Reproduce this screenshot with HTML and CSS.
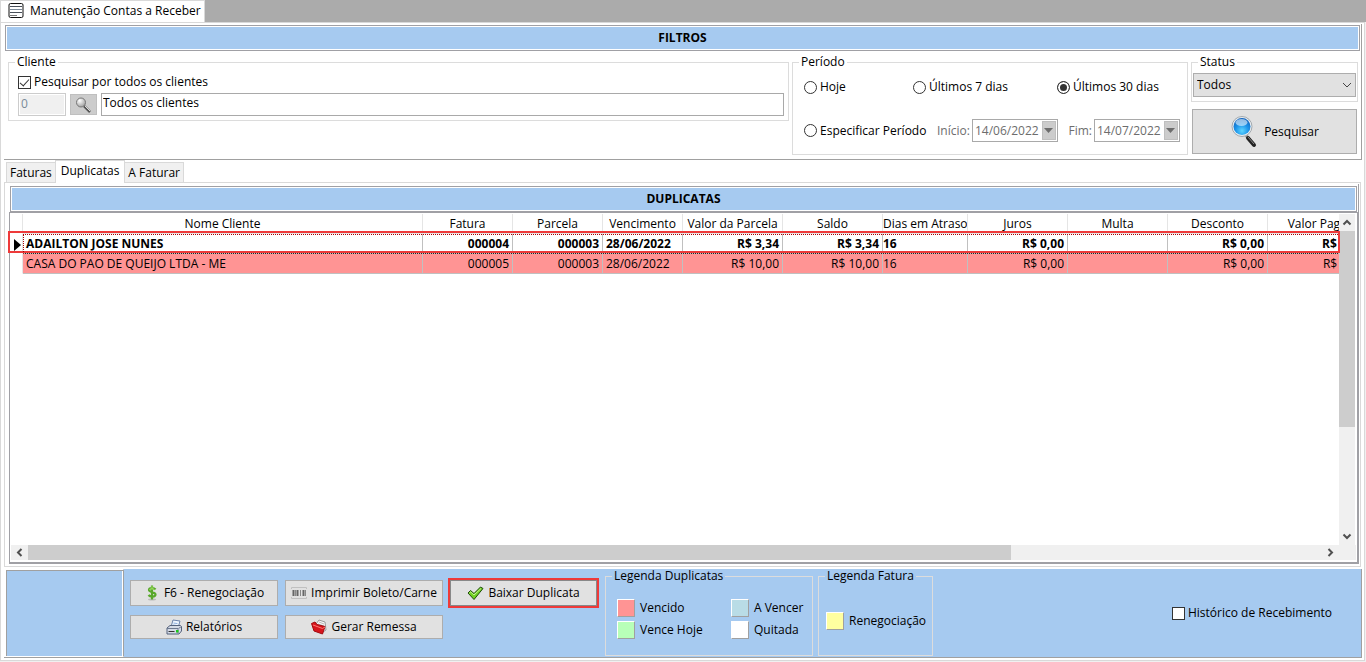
FILE: index.html
```html
<!DOCTYPE html>
<html lang="pt-BR">
<head>
    <meta charset="UTF-8">
    <meta name="viewport" content="width=device-width, initial-scale=1.0">
    <title>Manutenção Contas a Receber</title>
    <link rel="stylesheet" href="styles.css">
</head>
<body>
    <header class="titlebar">
        <a href="#" class="window-tab">
            <svg width="16" height="16" viewBox="0 0 16 16">
                <rect x="1" y=".5" width="14" height="14" rx="1.500" fill="#fff" stroke="#111"/>
                <path d="M2 3.500h12M2 9.500h12" stroke="#49505a"/>
                <path d="M2 6.500h12" stroke="#7b8a99"/>
                <path d="M2 12.500h7" stroke="#777"/>
            </svg>
            Manutenção Contas a Receber
        </a>
    </header>

    <main class="window">
        <section class="filters">
            <h2 class="bar">FILTROS</h2>
            <div class="filters-body">
                <fieldset class="group client">
                    <legend>Cliente</legend>
                    <label class="check"><input type="checkbox" checked>Pesquisar por todos os clientes</label>
                    <div class="client-row">
                        <input class="text code" type="text" value="0" aria-label="Código" disabled>
                        <button class="lookup" aria-label="Localizar cliente">
                            <svg width="18" height="18" viewBox="0 0 18 18">
                                <defs>
                                    <radialGradient id="glass" cx=".35" cy=".3" r=".8">
                                        <stop offset="0" stop-color="#fff"/>
                                        <stop offset="1" stop-color="#999"/>
                                    </radialGradient>
                                </defs>
                                <path d="M9 10l6 6" stroke="#555" stroke-width="2.500"/>
                                <path d="M10 10l5 5" stroke="#ddd"/>
                                <circle cx="6" cy="6.500" r="4.500" fill="url(#glass)" stroke="#777"/>
                            </svg>
                        </button>
                        <input class="text name" type="text" value="Todos os clientes" aria-label="Nome do cliente">
                    </div>
                </fieldset>

                <fieldset class="group period">
                    <legend>Período</legend>
                    <div class="period-row">
                        <label class="check today"><input type="radio" name="periodo">Hoje</label>
                        <label class="check week"><input type="radio" name="periodo">Últimos 7 dias</label>
                        <label class="check"><input type="radio" name="periodo" checked>Últimos 30 dias</label>
                    </div>
                    <div class="period-row dates">
                        <label class="check"><input type="radio" name="periodo">Especificar Período</label>
                        <label class="date">Início:
                            <span class="date-box">
                                <input type="text" value="14/06/2022" disabled>
                                <button aria-label="Abrir calendário" disabled><svg width="9" height="5" viewBox="0 0 9 5"><path d="M0 0h9L4.500 5z" fill="#6d6d6d"/></svg></button>
                            </span>
                        </label>
                        <label class="date">Fim:
                            <span class="date-box">
                                <input type="text" value="14/07/2022" disabled>
                                <button aria-label="Abrir calendário" disabled><svg width="9" height="5" viewBox="0 0 9 5"><path d="M0 0h9L4.500 5z" fill="#6d6d6d"/></svg></button>
                            </span>
                        </label>
                    </div>
                </fieldset>

                <div class="side">
                    <fieldset class="group status">
                        <legend>Status</legend>
                        <div class="select">
                            <select aria-label="Status">
                                <option>Todos</option>
                            </select>
                            <svg width="10" height="6" viewBox="0 0 10 6"><path d="M1 1l4 4 4-4" fill="none" stroke="#444"/></svg>
                        </div>
                    </fieldset>
                    <button class="btn search">
                        <svg width="28" height="32" viewBox="0 0 28 32">
                            <defs>
                                <radialGradient id="lens" cx=".5" cy=".75" r=".75">
                                    <stop offset="0" stop-color="#5fd6ff"/>
                                    <stop offset=".5" stop-color="#1c95ea"/>
                                    <stop offset="1" stop-color="#1260b8"/>
                                </radialGradient>
                            </defs>
                            <path d="M15 18l4 5" stroke="#999" stroke-width="3"/>
                            <path d="M18 22l6 7" stroke="#222" stroke-width="4" stroke-linecap="round"/>
                            <path d="M18 21l6 7" stroke="#888" stroke-width="1"/>
                            <circle cx="12" cy="10.500" r="10" fill="#e9eef2" stroke="#a2a9ae"/>
                            <circle cx="12" cy="10.500" r="8.500" fill="url(#lens)"/>
                            <ellipse cx="11.500" cy="6.500" rx="6" ry="3.500" fill="#fff" opacity=".55"/>
                        </svg>
                        Pesquisar
                    </button>
                </div>
            </div>
        </section>

        <nav class="tabs">
            <a href="#">Faturas</a>
            <a href="#" class="active">Duplicatas</a>
            <a href="#">A Faturar</a>
        </nav>

        <section class="tab-page">
            <div class="panel">
                <h2 class="bar">DUPLICATAS</h2>
                <div class="grid">
                    <div class="grid-view">
                        <table>
                            <colgroup>
                                <col class="c-mark"><col class="c-name"><col class="c-code"><col class="c-code"><col class="c-date">
                                <col class="c-money"><col class="c-money"><col class="c-days">
                                <col class="c-money"><col class="c-money"><col class="c-money"><col class="c-money">
                            </colgroup>
                            <thead>
                                <tr>
                                    <th></th>
                                    <th>Nome Cliente</th>
                                    <th>Fatura</th>
                                    <th>Parcela</th>
                                    <th>Vencimento</th>
                                    <th>Valor da Parcela</th>
                                    <th>Saldo</th>
                                    <th>Dias em Atraso</th>
                                    <th>Juros</th>
                                    <th>Multa</th>
                                    <th>Desconto</th>
                                    <th>Valor Pago</th>
                                </tr>
                            </thead>
                            <tbody>
                                <tr class="current">
                                    <td class="mark"><svg width="7" height="12" viewBox="0 0 7 12"><path d="M0 0l7 6-7 6z"/></svg></td>
                                    <td>ADAILTON JOSE NUNES</td>
                                    <td class="num">000004</td>
                                    <td class="num">000003</td>
                                    <td>28/06/2022</td>
                                    <td class="num">R$ 3,34</td>
                                    <td class="num">R$ 3,34</td>
                                    <td class="days">16</td>
                                    <td class="num">R$ 0,00</td>
                                    <td></td>
                                    <td class="num">R$ 0,00</td>
                                    <td class="num">R$ 0,00</td>
                                </tr>
                                <tr class="overdue">
                                    <td class="mark"></td>
                                    <td>CASA DO PAO DE QUEIJO LTDA - ME</td>
                                    <td class="num">000005</td>
                                    <td class="num">000003</td>
                                    <td>28/06/2022</td>
                                    <td class="num">R$ 10,00</td>
                                    <td class="num">R$ 10,00</td>
                                    <td class="days">16</td>
                                    <td class="num">R$ 0,00</td>
                                    <td></td>
                                    <td class="num">R$ 0,00</td>
                                    <td class="num">R$ 0,00</td>
                                </tr>
                            </tbody>
                        </table>
                    </div>
                    <div class="scroll scroll-y">
                        <svg width="16" height="17" viewBox="0 0 16 17"><path d="M4.500 10.500L8 7l3.500 3.500" fill="none" stroke="#505050" stroke-width="2"/></svg>
                        <div class="track"><div class="thumb"></div></div>
                        <svg width="16" height="17" viewBox="0 0 16 17"><path d="M4.500 6.500L8 10l3.500-3.500" fill="none" stroke="#505050" stroke-width="2"/></svg>
                    </div>
                    <div class="scroll scroll-x">
                        <svg width="17" height="15" viewBox="0 0 17 15"><path d="M10.500 4l-3.500 3.500 3.500 3.500" fill="none" stroke="#505050" stroke-width="2"/></svg>
                        <div class="track"><div class="thumb"></div></div>
                        <svg width="17" height="15" viewBox="0 0 17 15"><path d="M6.500 4l3.500 3.500-3.500 3.500" fill="none" stroke="#505050" stroke-width="2"/></svg>
                    </div>
                    <div class="row-marker"></div>
                </div>
            </div>
        </section>

        <footer class="footer">
            <div class="blank"></div>
            <div class="actions">
                <div class="buttons">
                    <button class="btn">
                        <svg width="16" height="16" viewBox="0 0 16 16">
                            <ellipse cx="8" cy="14.500" rx="4" ry="1" fill="#bbb"/>
                            <path d="M11.500 4.500C10 2.500 5 2.500 5 5s6.500 1.700 6.500 4.500S6 12 4.500 10M8 .5v14" fill="none" stroke="#5aa82c" stroke-width="2.200"/>
                            <path d="M10.500 4.500C9 3 5.500 3.500 5.500 5M8 1v4" fill="none" stroke="#9bdc5c"/>
                        </svg>
                        F6 - Renegociação
                    </button>
                    <button class="btn">
                        <svg width="16" height="14" viewBox="0 0 16 14">
                            <path d="M.5 3V1.500h15V3M.5 11v1.500h15V11" fill="none" stroke="#c0c0c0"/>
                            <path d="M2.500 4v6M6.500 4v6M12.500 4v6" stroke="#666" stroke-width="2"/>
                            <path d="M4.500 4v6M9.500 4v6M14.500 4v6" stroke="#888"/>
                        </svg>
                        Imprimir Boleto/Carne
                    </button>
                    <div class="highlight">
                        <button class="btn">
                            <svg width="17" height="15" viewBox="0 0 17 15">
                                <path d="M1 7l2.500-2.500L7 7.500 13.500 1 16 2.500 7 13.500z" fill="#6fd022" stroke="#1f4d0a"/>
                                <path d="M2.500 7l1.200-1 3.300 3 7-6.500" fill="none" stroke="#c5f590"/>
                            </svg>
                            Baixar Duplicata
                        </button>
                    </div>
                    <button class="btn">
                        <svg width="16" height="16" viewBox="0 0 16 16">
                            <path d="M5 8l2-7 7 1-2 7z" fill="#eef5ff" stroke="#6d84ad"/>
                            <path d="M7.500 4l4 .6M7 6l4 .6" stroke="#8fb0dd"/>
                            <path d="M1 9l3-2.500h10.500l1 1V12L13 15H1z" fill="#d4dae6" stroke="#55627c"/>
                            <path d="M1 9.500h11v5M12.500 9.500l3-2" fill="none" stroke="#6d7990"/>
                            <path d="M2.500 12.500h6" stroke="#333"/>
                            <rect x="10" y="11" width="2.500" height="2.500" fill="#19c919"/>
                        </svg>
                        Relatórios
                    </button>
                    <button class="btn">
                        <svg width="16" height="16" viewBox="0 0 16 16">
                            <path d="M5 5l3-4 6 2 1 8-3 2z" fill="#f5f5f5" stroke="#999"/>
                            <path d="M8 3l5 2M7 5l6 2" stroke="#bbb"/>
                            <path d="M.5 4.500L4 3l2 2.500 8 2L11.500 15 3 12z" fill="#d8151c" stroke="#a10c10"/>
                            <path d="M2 6l9.500 3.500L14 8" fill="none" stroke="#ff7772"/>
                        </svg>
                        Gerar Remessa
                    </button>
                </div>
                <fieldset class="group legend-dup">
                    <legend>Legenda Duplicatas</legend>
                    <span class="key"><i class="swatch red"></i>Vencido</span>
                    <span class="key"><i class="swatch blue"></i>A Vencer</span>
                    <span class="key"><i class="swatch green"></i>Vence Hoje</span>
                    <span class="key"><i class="swatch white"></i>Quitada</span>
                </fieldset>
                <fieldset class="group legend-fat">
                    <legend>Legenda Fatura</legend>
                    <span class="key"><i class="swatch yellow"></i>Renegociação</span>
                </fieldset>
                <label class="check history"><input type="checkbox">Histórico de Recebimento</label>
            </div>
        </footer>
    </main>
</body>
</html>
```
FILE: styles.css
```css
* {
    box-sizing: border-box;
    margin: 0;
    padding: 0;
}

body {
    min-height: 100vh;
    display: flex;
    flex-direction: column;
    padding: 0 1px 1px 0;
    background-color: #f0f0f0;
}

body, button, input, select {
    font-family: "Open Sans", "Noto Sans", sans-serif;
    font-size: 12px;
    line-height: 16px;
    color: #000;
}

a {
    color: #000;
    text-decoration: none;
}

svg {
    flex: none;
    display: block;
}

/* title bar */
.titlebar {
    display: flex;
    height: 22px;
    margin-right: -1px;
    background-color: #ababab;
}

.window-tab {
    display: flex;
    align-items: center;
    gap: 6px;
    padding: 0 3px 1px 7px;
    background-color: #fff;
    border: 1px solid #d9d9d9;
    border-bottom: none;
}

.window {
    flex: 1;
    display: flex;
    flex-direction: column;
    padding: 1px 2px 2px 3px;
    background-color: #fff;
    border: 1px solid #d9d9d9;
}

.bar {
    height: 26px;
    line-height: 22px;
    font-size: 12px;
    text-align: center;
    background-color: #a6caf0;
    border: 1px solid #a0a0a5;
    box-shadow: inset 0 0 0 1px #fff;
    padding-top: 1px;
}

/* filters */
.filters {
    padding: 1px;
    border: solid #a0a0a0;
    border-width: 0 1px 1px 0;
}

.filters-body {
    display: flex;
    gap: 3px;
    padding: 4px 2px 3px 3px;
}

.group {
    min-width: 0;
    border: 1px solid #dcdcdc;
}

.group legend {
    padding: 0 2px;
    line-height: 14px;
}

.check {
    display: flex;
    align-items: center;
    gap: 3px;
    white-space: nowrap;
}

.check input {
    appearance: none;
    flex: none;
    display: flex;
    justify-content: center;
    width: 13px;
    height: 13px;
    background-color: #fff;
    border: 1px solid #333;
}

.check input[type="radio"] {
    border-radius: 50%;
}

.check input[type="radio"]:checked {
    background-color: #333;
    box-shadow: inset 0 0 0 2px #fff;
}

.check input[type="checkbox"]:checked::before {
    content: "";
    width: 4px;
    height: 8px;
    border: solid #333;
    border-width: 0 1px 1px 0;
    transform: rotate(42deg);
}

.client {
    flex: 1;
    align-self: flex-start;
    padding: 5px 4px 4px 9px;
}

.client legend {
    margin-left: -3px;
}

.client-row {
    display: flex;
    align-items: center;
    gap: 4px;
    margin-top: 3px;
}

.text {
    height: 23px;
    padding: 0 1px 4px;
    background-color: #fff;
    border: 1px solid #a9a9a9;
}

.text.code {
    width: 48px;
    background-color: #f0f0f0;
    border-color: #ccc;
    box-shadow: inset 0 0 0 1px #fff;
    color: #7a8a99;
    padding: 0 2px 2px;
}

.text.name {
    flex: 1;
}

.lookup {
    display: flex;
    align-items: center;
    justify-content: center;
    width: 27px;
    height: 21px;
    background-color: #ccc;
    border: 1px solid #bfbfbf;
}

.period {
    width: 396px;
    padding: 10px 7px 12px 11px;
}

.period legend {
    margin-left: -5px;
}

.period-row {
    display: flex;
    align-items: center;
}

.today {
    width: 109px;
}

.week {
    width: 144px;
}

.dates {
    justify-content: space-between;
    margin-top: 24px;
}

.date {
    display: flex;
    align-items: center;
    gap: 2px;
    color: #6d6d6d;
}

.date-box {
    display: flex;
    width: 86px;
    height: 23px;
    padding: 1px;
    border: 1px solid #a9a9a9;
}

.date-box input {
    flex: 1;
    min-width: 0;
    padding-left: 1px;
    border: none;
    background-color: #fff;
    color: #6d6d6d;
}

.date-box button {
    display: flex;
    align-items: center;
    justify-content: center;
    width: 14px;
    background-color: #ccc;
    border: 1px solid #bfbfbf;
}

.side {
    width: 167px;
    display: flex;
    flex-direction: column;
    gap: 7px;
}

.status {
    padding: 4px 1px;
}

.status legend {
    margin-left: 5px;
}

.select {
    position: relative;
}

.select select {
    appearance: none;
    display: block;
    width: 100%;
    height: 24px;
    padding: 0 3px;
    background-color: #e1e1e1;
    border: 1px solid #adadad;
    border-radius: 0;
}

.select svg {
    position: absolute;
    top: 9px;
    right: 4px;
    pointer-events: none;
}

.btn {
    display: flex;
    align-items: center;
    justify-content: center;
    gap: 4px;
    background-color: #e1e1e1;
    border: 1px solid #adadad;
    white-space: nowrap;
}

.search {
    height: 45px;
    margin: 0 1px;
    gap: 6px;
}

/* tabs */
.tabs {
    display: flex;
    align-items: flex-end;
    height: 23px;
    padding-left: 2px;
}

.tabs a {
    height: 21px;
    padding: 2px 3px;
    background-color: #f0f0f0;
    border: 1px solid #d9d9d9;
}

.tabs .active {
    z-index: 1;
    height: 23px;
    padding: 2px 5px;
    margin: 0 -1px;
    background-color: #fff;
    border-bottom: none;
}

.tab-page {
    flex: 1;
    display: flex;
    margin: -1px 1px 2px 0;
    padding: 1px 1px 2px 4px;
    border: 1px solid #d9d9d9;
}

.panel {
    flex: 1;
    min-width: 0;
    display: flex;
    flex-direction: column;
    padding-top: 2px;
    border: solid #a0a0a5;
    border-width: 0 1px 1px 0;
}

.panel .bar {
    margin: 0 1px;
}

/* data grid */
.grid {
    flex: 1;
    position: relative;
    display: grid;
    grid-template-columns: minmax(0, 1fr) 18px;
    grid-template-rows: minmax(200px, 1fr) 17px;
    padding: 1px 0 0 1px;
    background-color: #fff;
    border: 1px solid #a0a0a5;
}

.grid-view {
    overflow: hidden;
}

table {
    table-layout: fixed;
    width: 1357px;
    border-collapse: separate;
    border-spacing: 0;
}

.c-mark { width: 12px; }
.c-name { width: 400px; }
.c-code { width: 90px; }
.c-date { width: 80px; }
.c-money { width: 100px; }
.c-days { width: 85px; }

th, td {
    height: 20px;
    padding: 0 3px;
    white-space: nowrap;
    overflow: hidden;
    border: solid #c0c0c0;
    border-width: 0 1px 1px 0;
}

th {
    padding: 0;
    font-weight: normal;
    border-color: #e5e5e5;
}

th:first-child, .mark {
    border-color: #e5e5e5;
    border-bottom-color: #fff;
}

.mark {
    padding: 2px 0 0 3px;
}

.num {
    text-align: right;
}

.days {
    padding: 0;
}

.current td {
    font-weight: bold;
}

.overdue td:not(.mark) {
    background-color: #ff9494;
}

.row-marker {
    position: absolute;
    top: 18px;
    left: -2px;
    right: 17px;
    height: 22px;
    border: 2px solid #ee3a3a;
    pointer-events: none;
}

.row-marker::before {
    content: "";
    position: absolute;
    inset: 1px 0 -3px 13px;
    border: dotted #a00;
    border-width: 1px 0 1px 1px;
    border-bottom-color: #222;
}

.scroll {
    display: flex;
    background-color: #f0f0f0;
    border: solid #fff;
}

.scroll .track {
    flex: 1;
}

.scroll .thumb {
    background-color: #cdcdcd;
}

.scroll-y {
    flex-direction: column;
    border-width: 0 2px 0 0;
}

.scroll-y .thumb {
    height: 66%;
}

.scroll-x {
    grid-column: 1 / 3;
    padding-right: 17px;
    border-width: 0 1px 2px 0;
}

.scroll-x .thumb {
    width: 76%;
    height: 100%;
}

/* footer */
.footer {
    display: flex;
    height: 89px;
    background-color: #a6caf0;
    border: solid #a0a0a0;
    border-width: 0 1px 1px 0;
}

.blank {
    width: 120px;
    border: solid #fff;
    border-width: 1px 1px 1px 2px;
    border-right-color: #a0a0a0;
    box-shadow: inset 1px 1px 0 #a0a0a0, inset -1px 0 0 #fff;
}

.actions {
    flex: 1;
    display: flex;
    padding: 0 29px 0 6px;
}

.buttons {
    display: grid;
    grid-template-columns: 148px 158px 149px;
    grid-template-rows: 30px 24px;
    gap: 7px;
    align-content: start;
    padding-top: 9px;
}

.buttons > .btn {
    height: 26px;
    align-self: center;
}

.buttons > .btn:nth-child(n + 4) {
    height: 24px;
}

.highlight {
    display: flex;
    margin-left: -2px;
    border: 2px solid #ee3a3a;
}

.highlight .btn {
    flex: 1;
    border-color: #888;
}

.legend-dup {
    width: 208px;
    height: 87px;
    margin-left: 6px;
    padding: 15px 10px 0 11px;
    display: grid;
    grid-template-columns: 114px 1fr;
    grid-auto-rows: 19px;
    row-gap: 3px;
    align-content: start;
}

.legend-dup legend {
    margin-left: -5px;
}

.legend-fat {
    width: 115px;
    height: 87px;
    margin-left: 5px;
    padding: 29px 0 0 7px;
}

.legend-fat legend {
    margin-left: -1px;
}

.key {
    display: flex;
    align-items: center;
    gap: 5px;
    white-space: nowrap;
}

.swatch {
    width: 18px;
    height: 18px;
    border: 1px solid;
    border-color: #fff #a0a0a0 #a0a0a0 #fff;
}

.red { background-color: #ff9494; }
.blue { background-color: #b9dce6; }
.green { background-color: #b8ffb8; }
.white { background-color: #fff; }
.yellow { background-color: #ffffa0; }

.history {
    margin-left: auto;
}
```
